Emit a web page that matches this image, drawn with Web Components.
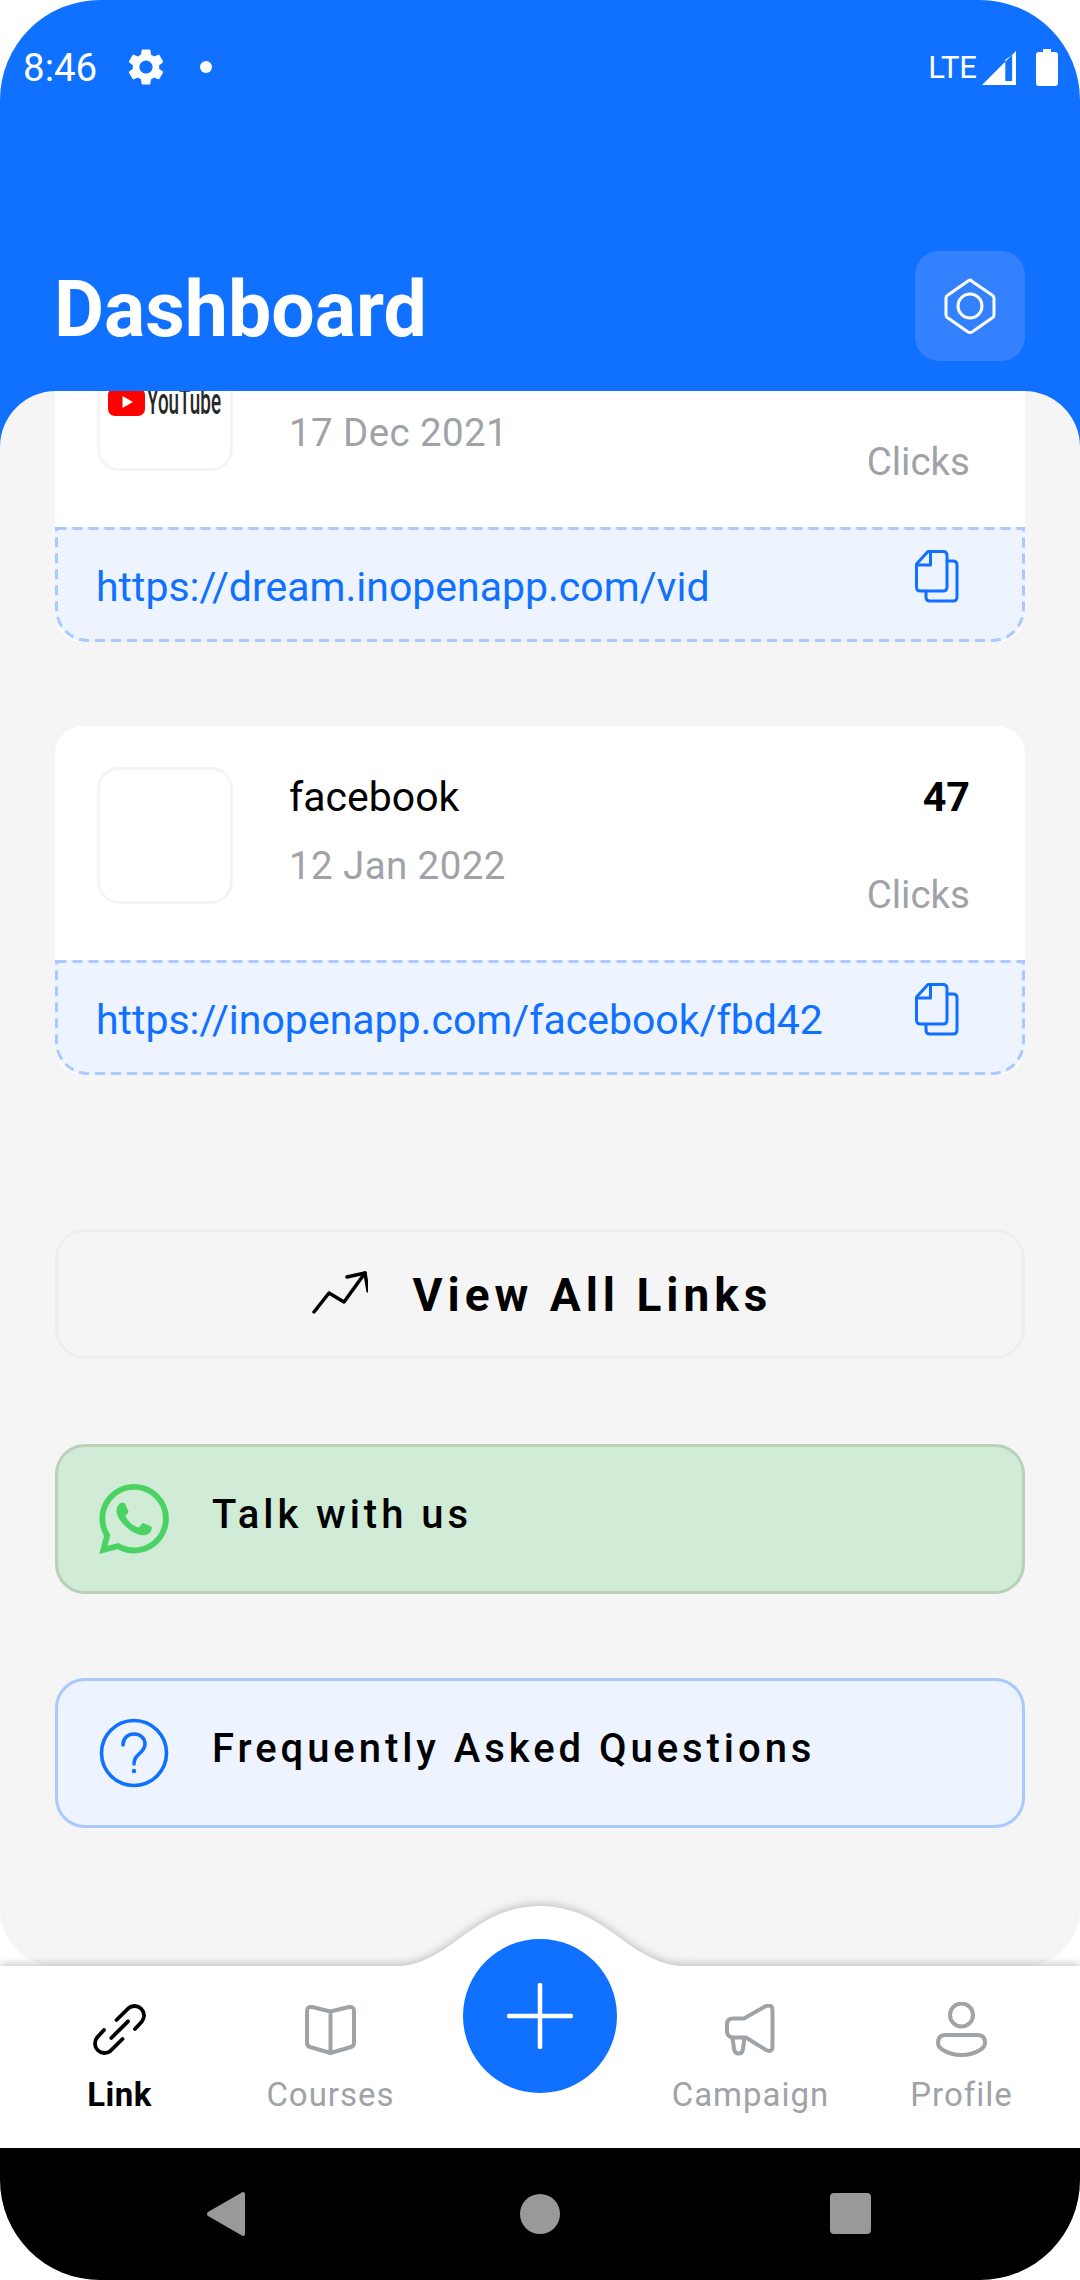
<!DOCTYPE html>
<html>
<head>
<meta charset="utf-8">
<style>
  html, body { margin: 0; padding: 0; background: #fff; }
  body { width: 1080px; height: 2280px; overflow: hidden; font-family: Roboto, "Liberation Sans", sans-serif; }
</style>
</head>
<body>
<dash-app>
  <dash-header slot="top" title="Dashboard"></dash-header>
  <link-card thumb="youtube" date="17 Dec 2021" url="https://dream.inopenapp.com/vid"></link-card>
  <link-card title="facebook" count="47" date="12 Jan 2022" url="https://inopenapp.com/facebook/fbd42"></link-card>
  <view-all-button>View All Links</view-all-button>
  <help-row kind="green">Talk with us</help-row>
  <help-row kind="blue">Frequently Asked Questions</help-row>
  <bottom-nav slot="bottom"></bottom-nav>
  <system-nav slot="bottom"></system-nav>
</dash-app>

<script>
const BLUE = '#1070ff';
const GREY = '#9fa3a8';

const define = (name, css, html) => {
  customElements.define(name, class extends HTMLElement {
    constructor() {
      super();
      this.attachShadow({ mode: 'open' });
    }
    connectedCallback() {
      this.shadowRoot.innerHTML = `<style>${css}</style>${html(this)}`;
    }
  });
};

define('dash-app', `
  :host { display: block; width: 1080px; height: 2280px; border-radius: 100px; overflow: hidden; position: relative; }
  .back { height: 1575px; background: linear-gradient(${BLUE} 50%, #fff 50%); }
  .sheet { height: 100%; background: #f5f5f5; border-radius: 56px; overflow: hidden; }
  /* list is scrolled, first card sits partly under the header */
  .scroll { margin-top: -98px; padding: 0 55px; display: flex; flex-direction: column; }
`, () => `
  <slot name="top"></slot>
  <div class="back"><div class="sheet"><div class="scroll"><slot></slot></div></div></div>
  <slot name="bottom"></slot>
`);

define('dash-header', `
  :host { display: block; background: ${BLUE}; height: 391px; color: #fff; }
  .status { height: 134px; display: flex; align-items: center; padding: 0 22px 0 23px; }
  .time { font-size: 38.5px; line-height: 134px; width: 85px; padding-top: 2px; }
  .gear { margin-left: 16px; width: 44px; height: 44px; display: block; }
  .dot { margin-left: 32px; width: 12px; height: 12px; border-radius: 50%; background: #fff; }
  .right { margin-left: auto; display: flex; align-items: center; }
  .lte { font-size: 31px; line-height: 40px; margin-right: 5px; padding-top: 2px; }
  .sig { display: block; width: 34px; height: 34px; margin: 2px 20px 0 0; }
  .bat { display: block; width: 22px; height: 37px; }
  .row { display: flex; align-items: flex-start; justify-content: space-between; padding: 117px 55px 0 54px; }
  h1 { margin: 4px 0 0; font-size: 77px; line-height: 110px; font-weight: 700; }
  .box { width: 110px; height: 110px; border-radius: 24px; background: #3381ff; display: flex; align-items: center; justify-content: center; }
  .box svg { display: block; }
`, (el) => `
  <div class="status">
    <span class="time">8:46</span>
    <svg class="gear" viewBox="0 0 24 24" fill="#fff"><path d="M19.14,12.94c0.04-0.3,0.06-0.61,0.06-0.94c0-0.32-0.02-0.64-0.07-0.94l2.03-1.58c0.18-0.14,0.23-0.41,0.12-0.61 l-1.92-3.32c-0.12-0.22-0.37-0.29-0.59-0.22l-2.39,0.96c-0.5-0.38-1.03-0.7-1.62-0.94L14.4,2.81c-0.04-0.24-0.24-0.41-0.48-0.41 h-3.84c-0.24,0-0.43,0.17-0.47,0.41L9.25,5.35C8.66,5.59,8.12,5.92,7.63,6.29L5.24,5.33c-0.22-0.08-0.47,0-0.59,0.22L2.74,8.87 C2.62,9.08,2.66,9.34,2.86,9.48l2.03,1.58C4.84,11.36,4.8,11.69,4.8,12s0.02,0.64,0.07,0.94l-2.03,1.58 c-0.18,0.14-0.23,0.41-0.12,0.61l1.92,3.32c0.12,0.22,0.37,0.29,0.59,0.22l2.39-0.96c0.5,0.38,1.03,0.7,1.62,0.94l0.36,2.54 c0.05,0.24,0.24,0.41,0.48,0.41h3.84c0.24,0,0.44-0.17,0.47-0.41l0.36-2.54c0.59-0.24,1.13-0.56,1.62-0.94l2.39,0.96 c0.22,0.08,0.47,0,0.59-0.22l1.92-3.32c0.12-0.22,0.07-0.47-0.12-0.61L19.14,12.94z M12,15.6c-1.98,0-3.6-1.62-3.6-3.6 s1.62-3.6,3.6-3.6s3.6,1.62,3.6,3.6S13.98,15.6,12,15.6z"/></svg>
    <span class="dot"></span>
    <div class="right">
      <span class="lte">LTE</span>
      <svg class="sig" viewBox="0 0 35 35"><path fill="#fff" fill-rule="evenodd" d="M35 0V35H0ZM24 9V31H31V4Z"/></svg>
      <svg class="bat" viewBox="0 0 22 37"><path fill="#fff" d="M7 0H15V3H19Q22 3 22 6V34Q22 37 19 37H3Q0 37 0 34V6Q0 3 3 3H7Z"/></svg>
    </div>
  </div>
  <div class="row">
    <h1>${el.getAttribute('title')}</h1>
    <div class="box">
      <svg width="52" height="58" viewBox="0 0 52 58" fill="none" stroke="#fff" stroke-width="3" stroke-linejoin="round">
        <path d="M26 3 L48 18 Q50 19 50 21 V38 Q50 40 48 41 L28 55 Q26 56 24 55 L4 41 Q2 40 2 38 V21 Q2 19 4 18 L24 4 Q26 2 28 4"/>
        <circle cx="26" cy="29" r="12"/>
      </svg>
    </div>
  </div>
`);

const YT_THUMB = `
  <svg width="114" height="30" viewBox="0 0 114 30">
    <rect x="0" y="0" width="37" height="28" rx="7" fill="#f00"/>
    <path d="M14.5 8 L25 14 L14.5 20Z" fill="#fff"/>
    <text x="39" y="26" font-family="Roboto, sans-serif" font-size="36" font-weight="500" fill="#282828" textLength="74" lengthAdjust="spacingAndGlyphs">YouTube</text>
  </svg>`;

define('link-card', `
  :host { display: block; height: 349px; margin-bottom: 84px; background: #fff; border-radius: 28px; }
  :host(:last-of-type) { margin-bottom: 0; }
  .top { height: 234px; display: flex; padding: 41px 55px 0 42px; box-sizing: border-box; }
  .thumb { width: 136px; height: 137px; box-sizing: border-box; border: 3px solid #f4f4f4; border-radius: 22px; display: flex; align-items: center; justify-content: center; }
  .thumb svg { display: block; }
  .info { margin-left: 56px; flex: 1; padding-top: 2px; }
  .title { font-size: 41px; line-height: 56px; height: 56px; color: #000; }
  .date { font-size: 38.5px; line-height: 56px; margin-top: 13px; color: ${GREY}; letter-spacing: 0.4px; }
  .side { text-align: right; padding-top: 2px; }
  .count { font-size: 41.25px; line-height: 56px; height: 56px; font-weight: 700; color: #000; }
  .clicks { font-size: 38.5px; line-height: 56px; margin-top: 42px; color: ${GREY}; }
  .link { height: 115px; position: relative; box-sizing: border-box; border-radius: 0 0 32px 32px; background: #edf3ff; display: flex; padding: 0 66px 0 41px; justify-content: space-between; }
  .dash { position: absolute; left: 0; top: 0; width: 970px; height: 115px; }
  .url { font-size: 41px; line-height: 56px; margin-top: 32px; color: ${BLUE}; }
  .copy { display: block; margin-top: 23px; }
`, (el) => `
  <div class="top">
    <div class="thumb">${el.getAttribute('thumb') === 'youtube' ? YT_THUMB : ''}</div>
    <div class="info">
      <div class="title">${el.getAttribute('title') || ''}</div>
      <div class="date">${el.getAttribute('date')}</div>
    </div>
    <div class="side">
      <div class="count">${el.getAttribute('count') || ''}</div>
      <div class="clicks">Clicks</div>
    </div>
  </div>
  <div class="link">
    <svg class="dash" viewBox="0 0 970 115" fill="none" stroke="#a9c9ff" stroke-width="3" stroke-dasharray="10 6">
      <path d="M1.5 1.5 H968.5 V82 A31.5 31.5 0 0 1 937 113.5 H33 A31.5 31.5 0 0 1 1.5 82 Z"/>
    </svg>
    <span class="url">${el.getAttribute('url')}</span>
    <svg class="copy" width="44" height="53" viewBox="0 0 44 53" fill="none" stroke="${BLUE}" stroke-width="3" stroke-linejoin="round" stroke-linecap="round">
      <path d="M1.5 14 L13 1.5 H28 Q32 1.5 32 5.5 V37 Q32 41 28 41 H5.5 Q1.5 41 1.5 37 Z"/>
      <path d="M15.5 1.5 V15 H1.5"/>
      <path d="M32 11 H38 Q42 11 42 15 V47 Q42 51 38 51 H15 Q11 51 11 47 V41"/>
    </svg>
  </div>
`);

define('view-all-button', `
  :host { display: flex; height: 130px; box-sizing: border-box; margin-top: 154px; margin-bottom: 85px; padding-left: 5px; border: 3px solid #eeeeee; border-radius: 30px; align-items: center; justify-content: center; font-size: 46px; font-weight: 700; letter-spacing: 5px; color: #000; }
  svg { display: block; margin-right: 44px; margin-top: -2px; }
  span { margin-top: 2px; }
`, () => `
  <svg width="56" height="44" viewBox="0 0 56 44" fill="none" stroke="#000" stroke-width="3.5" stroke-linecap="round" stroke-linejoin="round">
    <path d="M2 41 L17 22 L32 31 L53 2"/><path d="M35 6 L53 2 L56 20"/>
  </svg>
  <span><slot></slot></span>
`);

define('help-row', `
  :host { display: flex; height: 150px; box-sizing: border-box; border: 3px solid; border-radius: 30px; align-items: center; padding-left: 41px; font-size: 40px; font-weight: 500; letter-spacing: 3.95px; color: #000; }
  :host([kind=green]) { background: #d0ecd6; border-color: #b9d0b9; margin-bottom: 84px; }
  :host([kind=blue]) { background: #edf3ff; border-color: #a9c9ff; }
  svg { display: block; flex: none; }
  span { margin-left: 43px; margin-top: -9px; }
`, (el) => (el.getAttribute('kind') === 'green' ? `
  <svg width="70" height="70" viewBox="0 0 24 24" fill="#4ad363"><path d="M17.472 14.382c-.297-.149-1.758-.867-2.03-.967-.273-.099-.471-.148-.67.15-.197.297-.767.966-.94 1.164-.173.199-.347.223-.644.075-.297-.15-1.255-.463-2.39-1.475-.883-.788-1.48-1.761-1.653-2.059-.173-.297-.018-.458.13-.606.134-.133.298-.347.446-.52.149-.174.198-.298.298-.497.099-.198.05-.371-.025-.52-.075-.149-.669-1.612-.916-2.207-.242-.579-.487-.5-.669-.51-.173-.008-.371-.01-.57-.01-.198 0-.52.074-.792.372-.272.297-1.04 1.016-1.04 2.479 0 1.462 1.065 2.875 1.213 3.074.149.198 2.096 3.2 5.077 4.487.709.306 1.262.489 1.694.625.712.227 1.36.195 1.871.118.571-.085 1.758-.719 2.006-1.413.248-.694.248-1.289.173-1.413-.074-.124-.272-.198-.57-.347m-5.421 7.403h-.004a9.87 9.87 0 01-5.031-1.378l-.361-.214-3.741.982.998-3.648-.235-.374a9.86 9.86 0 01-1.51-5.26c.001-5.45 4.436-9.884 9.888-9.884 2.64 0 5.122 1.03 6.988 2.898a9.825 9.825 0 012.893 6.994c-.003 5.45-4.437 9.884-9.885 9.884m8.413-18.297A11.815 11.815 0 0012.05 0C5.495 0 .16 5.335.157 11.892c0 2.096.547 4.142 1.588 5.945L.057 24l6.305-1.654a11.882 11.882 0 005.683 1.448h.005c6.554 0 11.89-5.335 11.893-11.893a11.821 11.821 0 00-3.48-8.413z"/></svg>
` : `
  <svg width="70" height="70" viewBox="0 0 70 70" fill="none" stroke="${BLUE}" stroke-width="3.6" stroke-linecap="round">
    <circle cx="35" cy="35" r="32.5"/>
    <path d="M24 27 C24 20 29 16 35 16 C41 16 46 20 46 26 C46 31 43 33 40 36 C37 39 35 41 35 46"/>
    <circle cx="35" cy="53" r="2.2" fill="${BLUE}" stroke="none"/>
  </svg>
`) + `<span><slot></slot></span>`);

const NAV_ICONS = {
  link: `<svg width="53" height="53" viewBox="0 0 53 53" fill="none" stroke="currentColor" stroke-width="3.8" stroke-linecap="round">
    <path d="M23.5 17 L35.3 5.3 A9.5 9.5 0 0 1 48.7 18.7 L42 26"/>
    <path d="M29.5 36 L17.7 47.7 A9.5 9.5 0 0 1 4.3 34.3 L11 27"/>
    <path d="M18.3 35 L35 18.3"/>
  </svg>`,
  book: `<svg width="51" height="50" viewBox="0 0 51 50" fill="none" stroke="currentColor" stroke-width="4" stroke-linejoin="round">
    <path d="M25.5 6.5 L7 2 Q2 1.5 2 6 V38 Q2 41 5 42 L25.5 48 L46 42 Q49 41 49 38 V6 Q49 1.5 44 2 L25.5 6.5 V48"/>
  </svg>`,
  horn: `<svg width="50" height="52" viewBox="0 0 50 52" fill="none" stroke="currentColor" stroke-width="4" stroke-linejoin="round" style="margin-left:-2px">
    <path d="M8 33.5 Q2 33 2 27 V20 Q2 14.5 8 14.5 H19 L40 2.5 Q47 -0.5 47.5 6 V42 Q47.5 49 41 46 L21 33.5 Z"/>
    <path d="M7.5 33.5 L9 45 Q10 49.5 13.5 49.5 Q17.5 49.5 18 45 L19.5 33.5"/>
  </svg>`,
  user: `<svg width="51" height="55" viewBox="0 0 51 55" fill="none" stroke="currentColor" stroke-width="4">
    <circle cx="25.5" cy="13" r="11.5"/>
    <path d="M9 33 H42 Q49 33 49 41 Q49 45 44 48 Q36 53 25.5 53 Q15 53 7 48 Q2 45 2 41 Q2 33 9 33 Z"/>
  </svg>`
};

define('nav-item', `
  :host { display: flex; flex-direction: column; align-items: center; color: ${GREY}; font-size: 33px; letter-spacing: 1px; }
  :host([active]) { color: #000; font-weight: 700; letter-spacing: 0.5px; }
  .ic { height: 55px; display: flex; align-items: center; justify-content: center; }
  svg { display: block; }
  .txt { line-height: 44px; margin-top: 16px; white-space: nowrap; }
`, (el) => `
  <div class="ic">${NAV_ICONS[el.getAttribute('icon')]}</div>
  <div class="txt"><slot></slot></div>
`);

define('bottom-nav', `
  :host { display: block; height: 182px; position: relative; background: #fff; }
  .bump { position: absolute; left: 0; top: -60px; width: 1080px; height: 242px; filter: drop-shadow(0 -2px 4px rgba(0,0,0,.22)); }
  .items { position: relative; display: grid; grid-template-columns: 211px 211px 209px 211px 211px; padding: 36px 0 0 14px; }
  .fab { position: absolute; left: 463px; top: -27px; width: 154px; height: 154px; border-radius: 50%; background: ${BLUE}; display: flex; align-items: center; justify-content: center; }
  .fab svg { display: block; }
`, () => `
  <svg class="bump" viewBox="0 0 1080 242"><path fill="#fff" d="M0 60 H398 C430 60 457 32 482 17 C499 6 520 0 540 0 C560 0 581 6 598 17 C623 32 650 60 684 60 H1080 V242 H0 Z"/></svg>
  <div class="items">
    <nav-item icon="link" active>Link</nav-item>
    <nav-item icon="book">Courses</nav-item>
    <span></span>
    <nav-item icon="horn">Campaign</nav-item>
    <nav-item icon="user">Profile</nav-item>
  </div>
  <div class="fab">
    <svg width="66" height="66" viewBox="0 0 66 66" stroke="#fff" stroke-width="4.5" stroke-linecap="round"><path d="M33 2 V64 M2 33 H64"/></svg>
  </div>
`);

define('system-nav', `
  :host { display: block; height: 132px; background: #000; position: relative; }
  .keys { height: 132px; display: grid; grid-template-columns: 207px 38px 275px 40px 270px 41px; align-items: center; }
  svg, .home, .recent { display: block; margin-top: -1px; }
  .home { width: 40px; height: 40px; border-radius: 50%; background: #999; }
  .recent { width: 41px; height: 41px; border-radius: 4px; background: #999; }
  .a { grid-column: 2; } .b { grid-column: 4; } .c { grid-column: 6; }
`, () => `
  <div class="keys">
    <svg class="a" width="38" height="44" viewBox="0 0 38 44"><path fill="#999" d="M36 0 Q38 0 38 3 V41 Q38 44 36 44 Q35 44 34 43 L1 24 Q-1 22 1 20 L34 1 Q35 0 36 0Z"/></svg>
    <span class="home b"></span>
    <span class="recent c"></span>
  </div>
`);
</script>
</body>
</html>
